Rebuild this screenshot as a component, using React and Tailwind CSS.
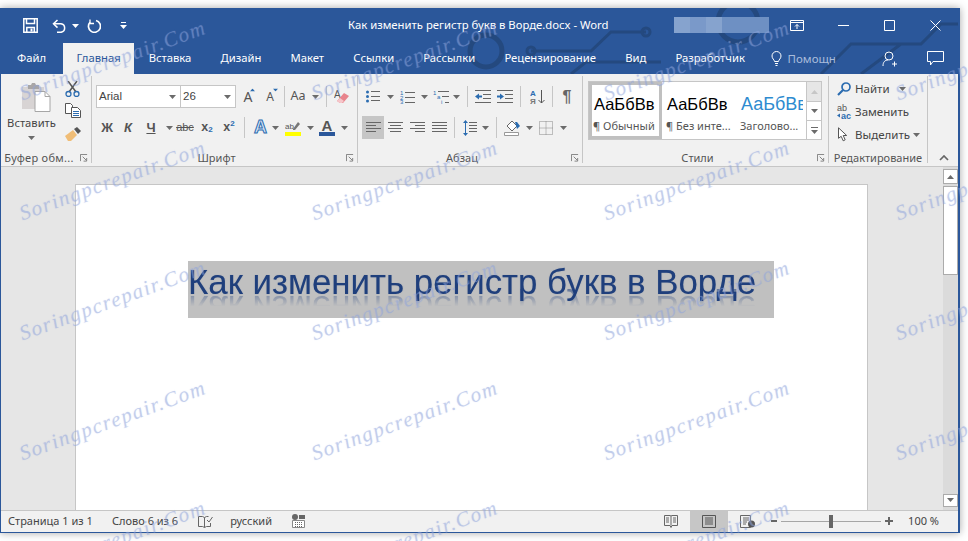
// Word 2016 ablak — szalag, dokumentum és állapotsor
const FONT = "font-['Noto_Sans','Open_Sans',sans-serif]";

const Caret = ({ className = '', color = '#6b6b6b' }) => (
  <svg width="7" height="4" viewBox="0 0 7 4" className={`shrink-0 ${className}`}><path d="M0 0h7L3.500 4z" fill={color} /></svg>
);

function Launcher() {
  return (
    <svg width="8" height="8" viewBox="0 0 9 9" fill="none" stroke="#777" strokeWidth="1">
      <path d="M.5 8V.5H8" />
      <path d="M3 3l4 4M7.500 4.500v3.500h-3.500" />
    </svg>
  );
}

function Slot({ className = '', children }) {
  return <div className={`flex items-center justify-center shrink-0 h-full ${className}`}>{children}</div>;
}

const VDivider = ({ className = '' }) => <div className={`w-px h-[21px] bg-[#c6c6c6] shrink-0 ${className}`} />;

const LineStack = ({ x = 0, w = 14, ys = [], color = '#666' }) =>
  ys.map((y, i) => <path key={i} d={`M${x} ${y + 0.5}h${w}`} stroke={color} strokeWidth="1" />);

function AlignIcon({ rows }) {
  return (
    <svg width="15" height="12" viewBox="0 0 15 12">
      {rows.map(([x, w], i) => <path key={i} d={`M${x} ${i * 3 + 0.5}h${w}`} stroke="#666" />)}
    </svg>
  );
}

function TitleBar() {
  return (
    <div className="relative flex items-center h-[35px] text-white shrink-0">
      <div className="w-[22px]" />
      <svg width="15" height="15" viewBox="0 0 15 15" fill="none" stroke="#fff" strokeWidth="1.500">
        <path d="M.8.8h13.400v13.400H.8z" />
        <path d="M3.500 1v4.500h8V1" />
        <path d="M3.800 14V9.500h7.500V14" />
        <path d="M8.500 10.500v3" strokeWidth="2" />
      </svg>
      <svg className="ml-[14px]" width="15" height="14" viewBox="0 0 15 14" fill="none" stroke="#fff" strokeWidth="1.500">
        <path d="M5.500 1L1.500 4.800l4 3.800" />
        <path d="M2 4.800h7a4.300 4.300 0 0 1 0 8.500H5" />
      </svg>
      <Caret color="#fff" className="ml-[5px]" />
      <svg className="ml-[8px]" width="14" height="14" viewBox="0 0 14 14" fill="none" stroke="#fff" strokeWidth="1.700">
        <path d="M9 1.500A6 6 0 1 1 3 3.300" />
        <path d="M3 .5v4h4" strokeWidth="1.300" />
      </svg>
      <svg className="ml-[19px]" width="7" height="7" viewBox="0 0 7 7" fill="#fff">
        <path d="M1 0h5v1H1zM0 3h7L3.500 7z" />
      </svg>
      <div className="absolute left-[347px] top-[8px] text-[11.300px] leading-[18px] whitespace-nowrap">Как изменить регистр букв в Ворде.docx - Word</div>
      <div className="absolute left-[673px] top-[9px] flex h-[16px] w-[95px] bg-[#7d9ccb]">
        <div className="w-[16px] bg-[#86a3ce]" />
        <div className="w-[16px] bg-[#7a99c9]" />
        <div className="w-[16px] bg-[#86a3ce]" />
        <div className="flex-1 bg-[#6e90c3]" />
      </div>
      <div className="ml-auto flex items-center">
        <svg width="14" height="11" viewBox="0 0 14 11" fill="none" stroke="#fff">
          <path d="M.5 .5h13v10H.500z" /><path d="M.5 2.500h13" /><path d="M7 9V4.500M5 6.500l2-2 2 2" />
        </svg>
        <svg className="ml-[34px]" width="11" height="1" viewBox="0 0 11 1"><path d="M0 .5h11" stroke="#fff" /></svg>
        <svg className="ml-[35px]" width="11" height="11" viewBox="0 0 11 11" fill="none" stroke="#fff"><path d="M.5.5h10v10H.5z" /></svg>
        <svg className="ml-[35px] mr-[17px]" width="11" height="11" viewBox="0 0 11 11" fill="none" stroke="#fff"><path d="M.5.5l10 10M10.500.5l-10 10" /></svg>
      </div>
    </div>
  );
}

const TABS = ['Вставка', 'Дизайн', 'Макет', 'Ссылки', 'Рассылки', 'Рецензирование', 'Вид', 'Разработчик'];

function TabBar() {
  return (
    <div className="flex items-stretch h-[31px] text-[11.250px] text-white shrink-0">
      <div className="flex items-center pl-[16px] pr-[17px]">Файл</div>
      <div className="flex items-center justify-center w-[71px] bg-[#f1f1f1] text-[#2b579a]">Главная</div>
      {TABS.map((t) => (
        <div key={t} className="flex items-center px-[14.600px]">{t}</div>
      ))}
      <div className="flex items-center ml-[11px] text-[#a9bcdb]">
        <svg width="11" height="15" viewBox="0 0 11 15" fill="none" stroke="#fff">
          <path d="M3.500 10.500C3.300 8.500 1 7.800 1 5a4.500 4.500 0 0 1 9 0c0 2.800-2.300 3.500-2.500 5.500z" />
          <path d="M4 12.500h3M4.500 14.500h2" />
        </svg>
        <span className="ml-[6px] text-[11.500px]">Помощн</span>
      </div>
      <div className="ml-auto flex items-center">
        <svg width="16" height="16" viewBox="0 0 16 16" fill="none" stroke="#fff">
          <circle cx="7" cy="5" r="4" />
          <path d="M1 15c0-4 2-6 5-6M12.500 10.500v5M10 13h5" />
        </svg>
        <svg className="ml-[29px] mr-[14px]" width="17" height="15" viewBox="0 0 17 15" fill="none" stroke="#fff">
          <path d="M.5.500h16v10H6L3.500 14v-3.500h-3z" />
        </svg>
      </div>
    </div>
  );
}

function GroupLabel({ text, launcher = true, className = '' }) {
  return (
    <div className={`relative h-[10px] mt-auto flex items-center justify-center text-[11px] text-[#555] ${launcher ? 'pr-[16px]' : ''} ${className}`}>
      <span className="whitespace-nowrap">{text}</span>
      {launcher && <span className="absolute right-[3px] top-[1px] flex"><Launcher /></span>}
    </div>
  );
}

function ClipboardGroup() {
  return (
    <div className="w-[91px] shrink-0 flex flex-col border-r border-[#c6c6c6] mb-[3px] mt-[2px]">
      <div className="flex">
        <div className="w-[61px] flex flex-col items-center pt-[6px]">
          <svg className="ml-[8px]" width="30" height="30" viewBox="0 0 30 30">
            <path d="M1 5h22v22H1z" fill="#d8d4d4" />
            <path d="M7 3h3l1-2h3l1 2h3v4H7z" fill="#a9a6a6" />
            <path d="M14 9.500h10l5 5v15H14z" fill="#fff" stroke="#a6a6a6" />
            <path d="M24 9.500v5h5" fill="none" stroke="#a6a6a6" />
          </svg>
          <span className="text-[11.200px] text-[#444] leading-[16px] mt-[3px]">Вставить</span>
          <Caret className="mt-[5px]" />
        </div>
        <div className="flex flex-col items-start pl-[3px] pt-[5px]">
          <svg width="15" height="16" viewBox="0 0 15 16" fill="none">
            <path d="M3 0l8 11M12 0L4 11" stroke="#555" strokeWidth="1.500" />
            <circle cx="3.500" cy="13" r="2.500" stroke="#2b6cb0" strokeWidth="1.300" />
            <circle cx="11.500" cy="13" r="2.500" stroke="#2b6cb0" strokeWidth="1.300" />
          </svg>
          <svg className="mt-[6px]" width="16" height="15" viewBox="0 0 16 15" fill="none" stroke="#555">
            <path d="M.5.500h5l2 2v8h-7z" fill="#fff" />
            <path d="M6.500 4.500h6l3 3v7h-9z" fill="#fff" />
            <path d="M8 8.500h6M8 10.500h6M8 12.500h6" stroke="#2b6cb0" />
          </svg>
          <svg className="mt-[9px]" width="16" height="14" viewBox="0 0 16 14">
            <path d="M0 9l8-6 4 5-6 6H3z" fill="#f0bd76" />
            <path d="M9 2l3-2 4 4-3 3z" fill="#555" />
          </svg>
        </div>
      </div>
      <GroupLabel text="Буфер обм..." className="tracking-[0.3px] !pr-[14px]" />
    </div>
  );
}

function FontGroup() {
  return (
    <div className="w-[266px] shrink-0 flex flex-col border-r border-[#c6c6c6] mb-[3px] mt-[2px]">
      <div className="flex items-center h-[23px] mt-[9px] pl-[4px]">
        <div className="flex items-center w-[85px] h-full bg-white border border-[#c6c6c6] pl-[2px] pr-[4px] text-[11.500px] text-[#444] font-['Liberation_Sans',sans-serif]">
          Arial<Caret className="ml-auto" />
        </div>
        <div className="flex items-center w-[55px] h-full bg-white border border-l-0 border-[#c6c6c6] pl-[2px] pr-[4px] text-[11.500px] text-[#444] font-['Liberation_Sans',sans-serif]">
          26<Caret className="ml-auto" />
        </div>
        <Slot className="w-[22px] ml-[1px] relative text-[14px] text-[#555]">A<span className="absolute right-[3px] top-[3px] flex"><Caret color="#2b6cb0" className="rotate-180 scale-75" /></span></Slot>
        <Slot className="w-[22px] relative text-[12px] text-[#555]">A<span className="absolute right-[2px] top-[3px] flex"><Caret color="#2b6cb0" className="scale-75" /></span></Slot>
        <VDivider className="ml-[3px]" />
        <Slot className="w-[26px] text-[12.500px] text-[#555]">Aa</Slot>
        <Caret className="ml-[1px]" />
        <VDivider className="ml-[7px]" />
        <Slot className="w-[30px]">
          <svg width="16" height="16" viewBox="0 0 16 16">
            <text x="0" y="9" fontSize="10" fill="#555" fontFamily="Liberation Sans">A</text>
            <path d="M3 12l7-8 5 3-6 7H6z" fill="#e8848c" />
            <path d="M3 12l3-3 4 3-2 2H6z" fill="#f6c6ca" />
          </svg>
        </Slot>
      </div>
      <div className="flex items-center h-[23px] mt-[8px] pl-[5px] text-[#555] font-['Liberation_Sans',sans-serif]">
        <Slot className="w-[20px] text-[13px] font-bold">Ж</Slot>
        <Slot className="w-[22px] text-[13px] font-bold italic">К</Slot>
        <Slot className="w-[24px] text-[13px] font-bold underline">Ч</Slot>
        <Caret className="ml-[3px]" />
        <Slot className="w-[24px] text-[11px] line-through">abc</Slot>
        <Slot className="w-[20px] text-[12.500px] font-bold">x<sub className="text-[8px] text-[#2b6cb0]">2</sub></Slot>
        <Slot className="w-[20px] ml-[2px] text-[12.500px] font-bold">x<sup className="text-[8px] text-[#2b6cb0]">2</sup></Slot>
        <VDivider className="ml-[5px]" />
        <Slot className="w-[15px] ml-[8px] text-[18px] font-bold text-[#dbe7f6] [-webkit-text-stroke:1px_#2b6cb0]">A</Slot>
        <Caret className="ml-[4px]" />
        <Slot className="w-[16px] ml-[6px]">
          <svg width="16" height="16" viewBox="0 0 16 16">
            <text x="0" y="9" fontSize="8" fill="#555" fontFamily="Liberation Sans">ab</text>
            <path d="M8 9l5-7 2 2-5 6H8z" fill="#777" />
            <path d="M0 12h16v4H0z" fill="#ffff00" />
          </svg>
        </Slot>
        <Caret className="ml-[6px]" />
        <Slot className="w-[16px] ml-[5px]">
          <div className="flex flex-col items-center leading-[13px] text-[15px] font-bold">
            A<div className="w-[16px] h-[4px] bg-[#2b579a]" />
          </div>
        </Slot>
        <Caret className="ml-[6px]" />
      </div>
      <GroupLabel text="Шрифт" />
    </div>
  );
}

function ParagraphGroup() {
  return (
    <div className="w-[225px] shrink-0 flex flex-col border-r border-[#c6c6c6] mb-[3px] mt-[2px]">
      <div className="flex items-center h-[23px] mt-[9px] pl-[8px]">
        <svg width="14" height="13" viewBox="0 0 14 13">
          <circle cx="1.500" cy="2" r="1.500" fill="#2b6cb0" /><circle cx="1.500" cy="6.500" r="1.500" fill="#2b6cb0" /><circle cx="1.500" cy="11" r="1.500" fill="#2b6cb0" />
          <LineStack x={5} w={9} ys={[1, 6, 10]} />
        </svg>
        <Caret className="ml-[7px]" />
        <svg className="ml-[6px]" width="15" height="14" viewBox="0 0 15 14">
          <text x="0" y="5" fontSize="6" fill="#2b6cb0" fontFamily="Liberation Sans">1</text>
          <text x="0" y="10" fontSize="6" fill="#2b6cb0" fontFamily="Liberation Sans">2</text>
          <text x="0" y="14" fontSize="6" fill="#2b6cb0" fontFamily="Liberation Sans">3</text>
          <LineStack x={5} w={10} ys={[2, 7, 12]} />
        </svg>
        <Caret className="ml-[6px]" />
        <svg className="ml-[5px]" width="16" height="14" viewBox="0 0 16 14">
          <text x="0" y="5" fontSize="6" fill="#2b6cb0" fontFamily="Liberation Sans">1</text>
          <text x="4" y="9" fontSize="6" fill="#2b6cb0" fontFamily="Liberation Sans">a</text>
          <text x="8" y="14" fontSize="6" fill="#2b6cb0" fontFamily="Liberation Sans">i</text>
          <LineStack x={5} w={11} ys={[1]} /><LineStack x={9} w={7} ys={[6]} /><LineStack x={12} w={4} ys={[12]} />
        </svg>
        <Caret className="ml-[4px]" />
        <VDivider className="ml-[7px]" />
        <svg className="ml-[7px]" width="16" height="13" viewBox="0 0 16 13">
          <LineStack x={0} w={16} ys={[0, 12]} /><LineStack x={8} w={8} ys={[4, 8]} />
          <path d="M0 6.500l4-3v2h3v2H4v2z" fill="#2b6cb0" />
        </svg>
        <svg className="ml-[6px]" width="16" height="13" viewBox="0 0 16 13">
          <LineStack x={0} w={16} ys={[0, 12]} /><LineStack x={8} w={8} ys={[4, 8]} />
          <path d="M7 6.500l-4-3v2H0v2h3v2z" fill="#2b6cb0" />
        </svg>
        <VDivider className="ml-[7px]" />
        <svg className="ml-[9px]" width="16" height="16" viewBox="0 0 16 16">
          <text x="0" y="7" fontSize="8" fontWeight="bold" fill="#2b6cb0" fontFamily="Liberation Sans">А</text>
          <text x="0" y="15" fontSize="8" fontWeight="bold" fill="#777" fontFamily="Liberation Sans">Я</text>
          <path d="M11.500 1v13M8.500 11l3 3 3-3" fill="none" stroke="#555" />
        </svg>
        <VDivider className="ml-[6px]" />
        <Slot className="w-[28px] text-[16px] font-bold text-[#666] font-['Liberation_Sans',sans-serif]">¶</Slot>
      </div>
      <div className="flex items-center h-[23px] mt-[8px] pl-[4px]">
        <Slot className="w-[22px] bg-[#c6c6c6]"><AlignIcon rows={[[0, 15], [0, 10], [0, 15], [0, 10]]} /></Slot>
        <Slot className="w-[22px]"><AlignIcon rows={[[0, 15], [2, 11], [0, 15], [2, 11]]} /></Slot>
        <Slot className="w-[22px]"><AlignIcon rows={[[0, 15], [5, 10], [0, 15], [5, 10]]} /></Slot>
        <Slot className="w-[22px]"><AlignIcon rows={[[0, 15], [0, 15], [0, 15], [0, 15]]} /></Slot>
        <VDivider className="ml-[4px]" />
        <svg className="ml-[8px]" width="14" height="16" viewBox="0 0 14 16">
          <path d="M2.500 0l2.500 3H0zM2.500 16L0 13h5zM2 3h1v10H2z" fill="#2b6cb0" />
          <LineStack x={6} w={8} ys={[2, 5, 8, 11]} />
        </svg>
        <Caret className="ml-[5px]" />
        <VDivider className="ml-[7px]" />
        <svg className="ml-[7px]" width="17" height="18" viewBox="0 0 17 18">
          <path d="M3 7l5-5 5 5-5 5z" fill="#fff" stroke="#666" />
          <path d="M11 3h2l3 4-3 3z" fill="#2b6cb0" />
          <path d="M.5 13.500h14v3H.5z" fill="#fff" stroke="#999" />
        </svg>
        <Caret className="ml-[5px]" />
        <svg className="ml-[6px]" width="14" height="14" viewBox="0 0 14 14" fill="none" stroke="#888" strokeDasharray="1 1">
          <path d="M.5.500h13v13H.5zM.5 7h13M7 .5v13" />
        </svg>
        <Caret className="ml-[7px]" />
      </div>
      <GroupLabel text="Абзац" />
    </div>
  );
}

function StyleItem({ sample, name, sampleClass = 'text-black text-[16.500px]', active = false, className = '' }) {
  return (
    <div className={`flex flex-col shrink-0 overflow-hidden whitespace-nowrap h-full ${active ? 'border-[3px] border-[#c0c0c0]' : 'border-[3px] border-transparent'} ${className}`}>
      <div className={`h-[34px] pt-[6px] pl-[2px] leading-[26px] font-['Liberation_Sans',sans-serif] ${sampleClass}`}>{sample}</div>
      <div className="text-[11px] leading-[14px] pl-[1px] text-[#555]">{name}</div>
    </div>
  );
}

function StylesGroup() {
  return (
    <div className="w-[246px] shrink-0 flex flex-col border-r border-[#c6c6c6] mb-[3px] mt-[2px]">
      <div className="flex h-[59px] ml-[5px] mt-[5px] w-[234px] bg-white border border-[#c6c6c6]">
        <StyleItem active sample="АаБбВв" name="¶ Обычный" className="w-[73px]" />
        <StyleItem sample="АаБбВв" name="¶ Без инте..." className="w-[74px]" />
        <StyleItem sample="АаБбВв" name="Заголово..." sampleClass="text-[#2e8bd0] text-[18px]" className="w-[70px]" />
        <div className="flex flex-col flex-1 border-l border-[#c6c6c6]">
          <div className="h-[20px] bg-[#e6e6e6] flex items-center justify-center border-b border-[#c6c6c6]"><Caret color="#c6c6c6" className="rotate-180" /></div>
          <div className="h-[19px] flex items-center justify-center border-b border-[#c6c6c6]"><Caret /></div>
          <div className="flex-1 flex flex-col gap-[2px] items-center justify-center"><div className="w-[7px] h-px bg-[#6b6b6b]" /><Caret /></div>
        </div>
      </div>
      <GroupLabel text="Стили" />
    </div>
  );
}

function EditRow({ icon, text, caret, className = '' }) {
  return (
    <div className={`flex items-center h-[23px] pl-[8px] text-[11.500px] text-[#444] ${className}`}>
      <span className="w-[18px] flex">{icon}</span>
      <span className="whitespace-nowrap">{text}</span>
      {caret}
    </div>
  );
}

function EditGroup() {
  return (
    <div className="w-[99px] shrink-0 flex flex-col border-r border-[#c6c6c6] mb-[3px] mt-[2px]">
      <div className="flex flex-col pt-[1px]">
        <EditRow
          text="Найти"
          caret={<Caret className="ml-[9px]" />}
          icon={
            <svg width="14" height="14" viewBox="0 0 14 14" fill="none" stroke="#2b6cb0" strokeWidth="1.700">
              <circle cx="9" cy="5" r="4" /><path d="M6 8l-5 5" strokeWidth="2.200" />
            </svg>
          }
        />
        <EditRow
          text="Заменить"
          icon={
            <svg width="16" height="16" viewBox="0 0 16 16">
              <text x="0" y="7" fontSize="9" fill="#555" fontFamily="Liberation Sans">ab</text>
              <text x="4" y="15" fontSize="9" fontWeight="bold" fill="#2b6cb0" fontFamily="Liberation Sans">ac</text>
              <path d="M0 11.500l3-2v4z" fill="#2b6cb0" />
            </svg>
          }
        />
        <EditRow
          text="Выделить"
          caret={<Caret className="ml-[3px]" />}
          icon={
            <svg width="12" height="15" viewBox="0 0 12 15" fill="#fff" stroke="#555">
              <path d="M1.500.8v10.500l2.700-2 2 4.500 2-1-2-4.300h3.500z" />
            </svg>
          }
        />
      </div>
      <GroupLabel text="Редактирование" launcher={false} />
    </div>
  );
}

function Ribbon() {
  return (
    <div className="flex h-[93px] bg-[#f1f1f1] border-b border-[#c6c6c6] shrink-0">
      <ClipboardGroup />
      <FontGroup />
      <ParagraphGroup />
      <StylesGroup />
      <EditGroup />
      <div className="flex-1 flex items-end justify-center pb-[5px] pl-[2px]">
        <svg width="10" height="6" viewBox="0 0 10 6" fill="none" stroke="#666" strokeWidth="1.700"><path d="M1 5l4-4 4 4" /></svg>
      </div>
    </div>
  );
}

function Scrollbar() {
  return (
    <div className="w-[15px] shrink-0 flex flex-col bg-[#dbdbdb] pt-[2px] pb-[3px]">
      <div className="h-[15px] bg-white border border-[#ababab] flex items-center justify-center"><Caret className="rotate-180" /></div>
      <div className="h-[89px] mt-[2px] bg-white border border-[#ababab]" />
      <div className="h-[13px] mt-auto bg-white border border-[#ababab] flex items-center justify-center"><Caret /></div>
    </div>
  );
}

function DocumentArea() {
  return (
    <div className="flex flex-1 min-h-0 bg-[#e6e6e6]">
      <div className="flex-1 min-w-0 pt-[17px] pl-[74px] pr-[75px]">
        <div className="h-full bg-white border border-b-0 border-[#c6c6c6] pl-[112px] pt-[76px]">
          <div className="w-[586px] h-[57px] bg-[#c0c0c0]">
            <span className="block pt-[1px] w-fit whitespace-nowrap text-[34.850px] leading-[40px] font-['Liberation_Sans',sans-serif] text-[#1f3f7c] [text-shadow:0_0_1px_rgba(31,63,124,0.35)] [-webkit-box-reflect:below_-14px_linear-gradient(transparent_55%,rgba(255,255,255,0.6))]">
              Как изменить регистр букв в Ворде
            </span>
          </div>
        </div>
      </div>
      <Scrollbar />
    </div>
  );
}

function StatusBar() {
  return (
    <div className="flex items-center h-[22px] bg-[#f1f1f1] border-t border-[#c6c6c6] text-[11px] text-[#444] shrink-0">
      <span className="ml-[7px] w-[104px] whitespace-nowrap">Страница 1 из 1</span>
      <span className="whitespace-nowrap">Слово 6 из 6</span>
      <svg className="ml-[20px]" width="15" height="13" viewBox="0 0 15 13" fill="none" stroke="#666">
        <path d="M.5 1.500h4l2 1v10l-2-1h-4zM6.500 2.500l2-1h2M6.500 12.500l2-1h4V8" />
        <path d="M9 5l2 2 3.500-5" />
      </svg>
      <span className="ml-[17px] w-[62px] whitespace-nowrap">русский</span>
      <svg width="13" height="14" viewBox="0 0 13 14">
        <circle cx="3" cy="3" r="3" fill="#666" /><path d="M7 1h6v4H7z" fill="#666" />
        <path d="M.5 6.500h12v7H.5z" fill="#fff" stroke="#888" />
        <path d="M3 8.500h7M3 10.500h7M3 12.500h7" stroke="#666" strokeDasharray="1 1" />
      </svg>
      <div className="ml-auto flex items-center h-full">
        <svg width="14" height="13" viewBox="0 0 14 13" fill="none" stroke="#666">
          <path d="M.5.500h6l.5 1 .5-1h6v10H8l-1 2-1-2H.5zM7 1.500v9" />
          <path d="M2 3h3M2 5h3M2 7h3M9 3h3M9 5h3M9 7h3" />
        </svg>
        <div className="ml-[12px] w-[38px] h-full bg-[#c6c6c6] flex items-center justify-center">
          <svg width="14" height="13" viewBox="0 0 14 13" fill="#c6c6c6" stroke="#555">
            <path d="M.5.500h13v12H.5zM3 3h8M3 5h8M3 7h8M3 9h8" />
          </svg>
        </div>
        <svg className="ml-[12px]" width="16" height="13" viewBox="0 0 16 13">
          <path d="M.5.500h10v12H.5z" fill="none" stroke="#666" />
          <path d="M3 3h6M3 5h6M3 7h4M3 9h3" stroke="#666" />
          <circle cx="11.500" cy="9" r="3.500" fill="#555" />
        </svg>
        <div className="ml-[15px] w-[6px] h-[2px] bg-[#666]" />
        <div className="relative ml-[4px] w-[100px] h-px bg-[#a6a6a6]">
          <div className="absolute left-[48px] top-[-6px] w-[4px] h-[13px] bg-[#666]" />
        </div>
        <svg className="ml-[4px]" width="8" height="8" viewBox="0 0 8 8"><path d="M0 4h8M4 0v8" stroke="#666" strokeWidth="2" /></svg>
        <span className="ml-[15px] mr-[19px] whitespace-nowrap">100 %</span>
      </div>
    </div>
  );
}

// Vízjel rács: 292 px oszlop, 120 px sor
const WM_X = [113, 405, 697, 989];
const WM_Y = [61, 181, 301, 421, 541];

function Watermarks() {
  return (
    <div className="absolute inset-0 overflow-hidden pointer-events-none">
      {WM_Y.flatMap((y) =>
        WM_X.map((x) => (
          <div
            key={`${x}-${y}`}
            className="absolute whitespace-nowrap -translate-x-1/2 -translate-y-1/2 -rotate-[20deg] italic text-[21px] tracking-[1.500px] font-['Liberation_Serif',serif] text-[#8ea4dc]/35 [text-shadow:0_0_1px_rgba(142,164,220,0.35)]"
            style={{ left: x, top: y }}
          >
            Soringpcrepair.Com
          </div>
        ))
      )}
    </div>
  );
}

export default function App() {
  return (
    <div className={`relative w-[968px] h-[541px] overflow-hidden bg-white pt-[8px] ${FONT}`}>
      <div className="flex flex-col w-[960px] h-[525px] bg-[#2b579a] pl-[1px] pr-[2px] pb-[1.500px] shadow-[0_0_8px_rgba(0,0,0,0.35)]">
        <div className="relative shrink-0">
          <svg className="absolute inset-0" width="957" height="66" viewBox="0 0 957 66" fill="none" stroke="#24497f" strokeWidth="3">
            <circle cx="485" cy="43" r="16" strokeWidth="5" />
            <circle cx="737" cy="14" r="20" strokeWidth="5" />
            <path d="M530 43h60l20-19h35M570 66l15-12h75M820 66l30-30h70l20-20h20M860 66l40-30" />
            <circle cx="530" cy="43" r="4" /><circle cx="645" cy="24" r="4" />
          </svg>
          <div className="relative">
            <TitleBar />
            <TabBar />
          </div>
        </div>
        <Ribbon />
        <DocumentArea />
        <StatusBar />
      </div>
      <Watermarks />
    </div>
  );
}
